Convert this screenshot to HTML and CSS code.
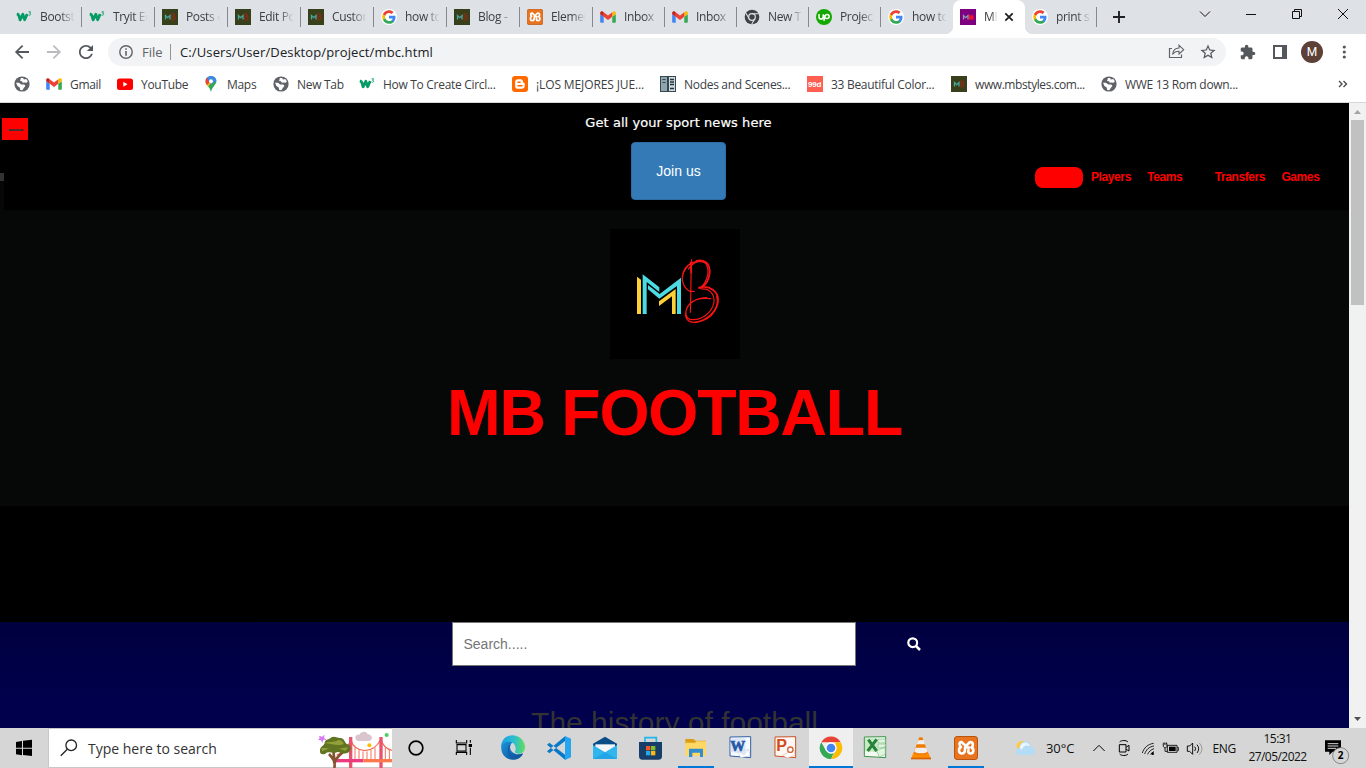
FILE: index.html
```html
<!DOCTYPE html>
<html lang="en">
<head>
<meta charset="utf-8">
<title>MB Football</title>
<link rel="stylesheet" href="styles.css">
</head>
<body>
<svg class="defs" aria-hidden="true">
  <symbol id="w3" viewBox="0 0 16 16"><path d="M.8 4.800c1.500.3 2 1.200 2.400 2.500l.9 3.500 2.700-5.500 1.900 5.500 2.500-5.800" fill="none" stroke="#049b66" stroke-width="2.800" stroke-linejoin="round"/><path d="M12.600 2.800h2l-1 1.500c1.600 0 1.500 2.300-.9 2" fill="none" stroke="#049b66" stroke-width=".9"/></symbol>
  <symbol id="mb" viewBox="0 0 16 16"><path fill="#37401a" d="M0 0h16v16H0z"/><path d="M3.500 10.500v-4l2.200 2.200 2.300-2.200v4" fill="none" stroke="#48a69b" stroke-width="1.300"/><path d="M10 11V5c3-1 3.500 2 1 2.800 4 0 2 3.700-1 3.200" fill="none" stroke="#8f2a17" stroke-width="1.100"/></symbol>
  <symbol id="mbp" viewBox="0 0 16 16"><path fill="#7e007e" d="M0 0h16v16H0z"/><path d="M3.500 10.500v-4l2.200 2.200 2.300-2.200v4" fill="none" stroke="#8f97b8" stroke-width="1.300"/><path d="M9 6.200h4.500v4.400H9z" fill="#f0102a"/></symbol>
  <symbol id="google" viewBox="-1 -1 26 26"><circle cx="12" cy="12" r="13" fill="#fff"/><path fill="#4285f4" d="M22.560 12.250c0-.78-.07-1.530-.2-2.250H12v4.260h5.920c-.26 1.370-1.040 2.530-2.210 3.310v2.770h3.570c2.080-1.920 3.280-4.740 3.280-8.090z"/><path fill="#34a853" d="M12 23c2.970 0 5.460-.98 7.280-2.660l-3.570-2.770c-.98.66-2.230 1.060-3.710 1.060-2.860 0-5.290-1.930-6.160-4.530H2.180v2.840C3.990 20.530 7.700 23 12 23z"/><path fill="#fbbc05" d="M5.840 14.090c-.22-.66-.35-1.360-.35-2.090s.13-1.430.35-2.090V7.070H2.180C1.430 8.550 1 10.220 1 12s.43 3.450 1.180 4.930z"/><path fill="#ea4335" d="M12 5.380c1.620 0 3.060.56 4.210 1.640l3.150-3.150C17.450 2.090 14.970 1 12 1 7.700 1 3.990 3.470 2.180 7.070l3.660 2.840c.87-2.600 3.300-4.530 6.160-4.530z"/></symbol>
  <symbol id="gmail" viewBox="51 30 90 90"><path fill="#4285f4" d="M58 108h14V74L52 59v43c0 3.320 2.690 6 6 6"/><path fill="#34a853" d="M120 108h14c3.320 0 6-2.690 6-6V59l-20 15"/><path fill="#fbbc04" d="M120 48v26l20-15v-8c0-7.420-8.470-11.650-14.400-7.200"/><path fill="#ea4335" d="M72 74V48l24 18 24-18v26L96 92"/><path fill="#c5221f" d="M52 51v8l20 15V48l-5.600-4.200c-5.940-4.450-14.400-.22-14.400 7.200"/></symbol>
  <symbol id="xampp" viewBox="0 0 24 24"><rect x=".5" y=".5" width="23" height="23" rx="2.500" fill="#e8741f" stroke="#b9540f"/><path d="M7.500 6C5 6 4.800 9.500 7 11c-3 1.500-2.500 6.500 1 6.500 2.500 0 3-2 3-4.500v-1.500h4M7.500 6 12 10l4-4c3.500 0 3.500 4 1.500 5.500 3 1.500 2.200 6-1 6-2.500 0-2.500-2-2-3.500" fill="none" stroke="#fff" stroke-width="2.600" stroke-linejoin="round" stroke-linecap="round"/></symbol>
  <symbol id="chromegrey" viewBox="0 0 24 24"><circle cx="12" cy="12" r="11" fill="#3f4347"/><circle cx="12" cy="12" r="5" fill="#3f4347" stroke="#dee1e6" stroke-width="1.800"/><path d="M12 7h10M7.700 14.500 2.800 6M16.300 14.500 11.500 23" stroke="#dee1e6" stroke-width="1.600"/></symbol>
  <symbol id="upwork" viewBox="0 0 16 16"><circle cx="8" cy="8" r="8" fill="#14a800"/><path d="M3 5v2.700c0 3.200 4.200 3.200 4.200 0V5.500c1 2.600 2 4.100 3.700 4.100 3 0 3-4 0-4-1.800 0-2.200 2-3 6.200" fill="none" stroke="#fff" stroke-width="1.500"/></symbol>
  <symbol id="globe" viewBox="1.500 1.500 21 21"><circle cx="12" cy="12" r="10" fill="#5f6368"/><path d="M4.200 10.500 8 10.200l3 2.300h4l1.500 2-2 2.500-2 3.200-2.800-.2-.7-3.500-3-1.800zM10.500 4l3 .2 1 1.800 3-.5 2.300 3-1.800 2-3-.5-2 .5-1-2-2.500-.5z" fill="#fff"/></symbol>
  <symbol id="blogger" viewBox="0 0 16 16"><rect width="16" height="16" rx="3" fill="#ff6a00"/><path d="M5.800 3.200h2.700c1.500 0 2.500 1 2.500 2.500 0 1.300 1.700.5 1.700 1.800v2.300c0 2-1 3-3 3H5.800c-1.700 0-2.600-1-2.600-2.600V5.800c0-1.600 1-2.600 2.600-2.600z" fill="#fff"/><path d="M6 6.300h2M6 9.700h4" stroke="#ff6a00" stroke-width="1.500" stroke-linecap="round"/></symbol>
</svg>

<header class="browser">
  <div class="tabstrip">
    <div class="tab"><svg><use href="#w3"/></svg><span>Bootst</span></div>
    <div class="tab"><svg><use href="#w3"/></svg><span>Tryit Ed</span></div>
    <div class="tab"><svg><use href="#mb"/></svg><span>Posts ‹</span></div>
    <div class="tab"><svg><use href="#mb"/></svg><span>Edit Po</span></div>
    <div class="tab"><svg><use href="#mb"/></svg><span>Custon</span></div>
    <div class="tab"><svg><use href="#google"/></svg><span>how to</span></div>
    <div class="tab"><svg><use href="#mb"/></svg><span>Blog -</span></div>
    <div class="tab"><svg><use href="#xampp"/></svg><span>Elemer</span></div>
    <div class="tab narrow"><svg><use href="#gmail"/></svg><span>Inbox</span></div>
    <div class="tab narrow"><svg><use href="#gmail"/></svg><span>Inbox</span></div>
    <div class="tab narrow"><svg><use href="#chromegrey"/></svg><span>New T</span></div>
    <div class="tab narrow"><svg><use href="#upwork"/></svg><span>Projec</span></div>
    <div class="tab narrow last"><svg><use href="#google"/></svg><span>how to</span></div>
    <div class="tab narrow active"><svg><use href="#mbp"/></svg><span>MB</span><svg class="tab-close" viewBox="0 0 10 10"><path d="m1.300 1.300 7.400 7.400M8.700 1.300 1.300 8.700" stroke="#202124" stroke-width="1.800"/></svg></div>
    <div class="tab narrow"><svg><use href="#google"/></svg><span>print s</span></div>
    <svg class="new-tab" viewBox="0 0 12 12"><path d="M6 0v12M0 6h12" stroke="#202124" stroke-width="1.900"/></svg>
    <div class="window-controls">
      <svg viewBox="0 0 12 12"><path d="m1 3.500 5 5 5-5" /></svg>
      <svg viewBox="0 0 12 12"><path d="M1 6.500h10"/></svg>
      <svg viewBox="0 0 12 12"><path d="M1.500 3.500h7v7h-7zM3.500 3.500v-2h7v7h-2"/></svg>
      <svg viewBox="0 0 12 12"><path d="m1 1 10 10M11 1 1 11"/></svg>
    </div>
  </div>

  <div class="toolbar">
    <svg class="tool" viewBox="-4 -6 32 36"><path transform="translate(12 12) scale(.88) translate(-12 -12)" d="M20 11H7.830l5.590-5.590L12 4l-8 8 8 8 1.410-1.410L7.830 13H20z"/></svg>
    <svg class="tool faded" viewBox="-4 -6 32 36"><path transform="translate(12 12) scale(-.88 .88) translate(-12 -12)" d="M20 11H7.830l5.590-5.590L12 4l-8 8 8 8 1.410-1.410L7.830 13H20z"/></svg>
    <svg class="tool" viewBox="-4 -6 32 36"><path transform="translate(12 12) scale(.88) translate(-12 -12)" d="M17.650 6.350C16.200 4.900 14.210 4 12 4c-4.420 0-7.990 3.580-7.990 8s3.570 8 7.990 8c3.730 0 6.840-2.550 7.730-6h-2.080c-.82 2.330-3.040 4-5.650 4-3.310 0-6-2.690-6-6s2.690-6 6-6c1.660 0 3.140.69 4.220 1.780L13 11h7V4z"/></svg>
    <div class="omnibox">
      <svg class="info" viewBox="0 0 14 14"><circle cx="7" cy="7" r="6.200" fill="none" stroke="#5f6368" stroke-width="1.400"/><path d="M7 3.200v1.500M7 6v4.700" stroke="#5f6368" stroke-width="1.600"/></svg>
      <span class="scheme">File</span>
      <span class="url">C:/Users/User/Desktop/project/mbc.html</span>
      <svg class="tool share" viewBox="0 0 32 36"><path d="M12 14.500H9.500v9h12V20.500" fill="none" stroke="#5f6368" stroke-width="1.200"/><path d="M12.500 20.500c.5-4.500 3-6.500 6.500-6.500v-2.700l4.700 4.400-4.700 4.300v-2.700c-3 0-5 .9-6.500 3.200z" fill="none" stroke="#5f6368" stroke-width="1.100"/></svg>
      <svg class="tool" viewBox="-4 -6 32 36"><path transform="translate(12 12) scale(.76) translate(-12 -12)" d="m22 9.240-7.190-.62L12 2 9.190 8.630 2 9.240l5.460 4.730L5.820 21 12 17.270 18.180 21l-1.630-7.030zM12 15.400l-3.760 2.270 1-4.280-3.320-2.880 4.380-.38L12 6.100l1.710 4.040 4.380.38-3.320 2.880 1 4.280z"/></svg>
    </div>
    <svg class="tool" viewBox="-4 -6 32 36"><path transform="translate(12 12) scale(.69) translate(-12.500 -11.500)" d="M20.500 11H19V7c0-1.100-.9-2-2-2h-4V3.500C13 2.120 11.880 1 10.500 1S8 2.120 8 3.500V5H4c-1.100 0-1.990.9-1.990 2v3.800H3.500c1.490 0 2.700 1.210 2.700 2.700s-1.210 2.700-2.700 2.700H2V20c0 1.100.9 2 2 2h3.800v-1.500c0-1.490 1.210-2.700 2.700-2.700s2.700 1.210 2.700 2.700V22H17c1.100 0 2-.9 2-2v-4h1.500c1.380 0 2.500-1.120 2.500-2.500S21.880 11 20.500 11z"/></svg>
    <svg class="tool" viewBox="0 0 32 36"><path fill-rule="evenodd" d="M9 11h14v14H9zm2 2v10h7V13z"/></svg>
    <div class="avatar"><b>M</b></div>
    <svg class="tool" viewBox="0 0 32 36"><circle cx="16.300" cy="13" r="1.600"/><circle cx="16.300" cy="18" r="1.600"/><circle cx="16.300" cy="23" r="1.600"/></svg>
  </div>

  <nav class="bookmarks">
    <div><svg><use href="#globe"/></svg></div>
    <div><svg><use href="#gmail"/></svg><span>Gmail</span></div>
    <div><svg viewBox="0 0 16 16"><rect y="2.500" width="16" height="11.500" rx="2.500" fill="#f00"/><path d="m6.300 5.700 4.200 2.500-4.200 2.500z" fill="#fff"/></svg><span>YouTube</span></div>
    <div><svg viewBox="0 0 16 16"><path d="M8 0C5 0 2.600 2.300 2.600 5.200 2.600 8.700 6.500 10 8 16c1.500-6 5.400-7.300 5.400-10.800C13.400 2.300 11 0 8 0" fill="#34a853"/><path d="M2.600 5.500C2.500 8 4 9.300 5 10.600L10 5z" fill="#fbbc04"/><path d="M2.600 5.200c0-1.500.6-2.700 1.500-3.600L8 5 4 9C3 8 2.600 6.500 2.600 5.200" fill="#ea4335"/><path d="M4 1.700C6 0 8.500-.5 10.500.6L6 5.500zM10.500.6c1.700.8 2.800 2.400 2.900 4.200L7 9z" fill="#4285f4"/><circle cx="8" cy="5.200" r="2" fill="#fff"/></svg><span>Maps</span></div>
    <div><svg><use href="#globe"/></svg><span>New Tab</span></div>
    <div><svg><use href="#w3"/></svg><span>How To Create Circl...</span></div>
    <div><svg><use href="#blogger"/></svg><span class="caps">¡LOS MEJORES JUE...</span></div>
    <div><svg viewBox="0 0 16 16"><path fill="#35474f" d="M0 0h16v16H0z"/><path fill="#90a4ae" d="M1 1h6v14H1z"/><path fill="#cfd8dc" d="M9 1h6v14H9z"/><path d="M2.500 3.500h3M2.500 6.500h3" stroke="#35474f"/><path d="M10 3.500h4M10 6h4M10 8.500h4M10 12.500h4" stroke="#24343b" stroke-width="1.300"/></svg><span>Nodes and Scenes...</span></div>
    <div><svg viewBox="0 0 16 16"><path fill="#fe5f50" d="M0 0h16v16H0z"/><text x="1" y="10.800" class="nine">99d</text></svg><span>33 Beautiful Color...</span></div>
    <div><svg><use href="#mb"/></svg><span class="tight">www.mbstyles.com...</span></div>
    <div><svg><use href="#globe"/></svg><span>WWE 13 Rom down...</span></div>
    <svg class="more" viewBox="0 0 10 8"><path d="m1 1 3 3-3 3M5.500 1l3 3-3 3" fill="none" stroke="#4a4d51" stroke-width="1.400"/></svg>
  </nav>
</header>

<main class="viewport">
  <div class="page">
    <section class="masthead">
      <div class="left-edge"><div class="menu-chip">----</div></div>
      <div class="join">
        <p>Get all your sport news here</p>
        <button>Join us</button>
      </div>
      <nav class="links">
        <a class="pill"></a><a>Players</a><a>Teams</a><a class="spaced">Transfers</a><a>Games</a>
      </nav>
      <i class="stub"></i>
    </section>
    <section class="hero">
      <svg class="logo" viewBox="30 27 390 390"><path fill="#000" d="M30 27h390v390H30z"/>
        <path fill="#fcd036" d="M111 170l12 9v103h-12zM177 244l50-37v75h-11v-53l-39 29z"/>
        <path fill="#4cdbe3" d="M128 163l50 39v14l-38-30v96h-12zM144 195l35 27 64-49v109h-12v-84l-53 38-34-28z"/>
        <g fill="none" stroke="#f51414" stroke-linecap="round"><path stroke-width="3.500" d="M275 119c-3 50-2 105-4 158"/><path stroke-width="5.500" d="M272 128l2 30M301 204c24-10 33-46 25-66-5-15-24-19-37-15M297 203c34-9 58 13 57 38-1 32-33 62-69 66"/><path stroke-width="3.500" d="M319 131c-22-15-58-3-68 23-10 24-1 49 18 60l14 0M265 148c12-22 42-32 53-16 14 22 1 62-21 73M247 183c-2-25 13-47 33-56"/><path stroke-width="3.500" d="M303 207c25-3 41 15 39 39-5 33-40 58-72 52-20-7-12-36-1-46 15-16 43-18 63-16M285 307c-22 2-32-14-27-33 5-26 33-41 63-41M350 229c8 26-9 59-36 70"/></g></svg>
      <h1>MB FOOTBALL</h1>
    </section>
    <section class="story">
      <form class="search">
        <input type="text" placeholder="Search.....">
        <svg viewBox="0 0 14 14"><circle cx="5.700" cy="5.700" r="4.400" fill="none" stroke="#fff" stroke-width="2.200"/><path d="m9 9 4 4" stroke="#fff" stroke-width="2.500"/></svg>
      </form>
      <h2>The history of football</h2>
    </section>
  </div>
  <div class="scrollbar">
    <svg viewBox="0 0 17 17"><path d="m5 11 3.500-4 3.500 4z" fill="#a3a3a3"/></svg>
    <div class="thumb"></div>
    <svg class="down" viewBox="0 0 17 17"><path d="m5 6 3.500 4L12 6z" fill="#505050"/></svg>
  </div>
</main>

<footer class="taskbar">
  <svg class="start" viewBox="0 84 144 120"><path d="M48 126l18-3v20H48zM69 122l27-3v24H69zM48 146h18v20l-18-3zM69 146h27v22l-27-3z"/></svg>
  <div class="finder">
    <svg class="lens" viewBox="0 0 18 18"><circle cx="11.200" cy="6.300" r="5.300"/><path d="M7.300 10.200.8 16.800"/></svg>
    <span>Type here to search</span>
    <svg class="bridge" viewBox="954 84 222 120"><g fill="#d8c5ce"><path d="M1066 113c0-8 8-11 13-9 4-11 21-11 24-1 8 0 13 6 13 11-1 6-6 9-11 9h-28c-6 0-11-4-11-10z"/></g><g fill="none" stroke="#f3705a"><path stroke-width="4" d="M1052 118c12 45 70 45 90 0 7 20 20 31 34 33M1010 165c18-5 30-18 42-43"/><path stroke-width="3" d="M1065 142v36M1077 150v28M1089 154v24M1101 154v24M1113 150v28M1125 143v35M1156 143v35M1168 150v28"/></g><path stroke="#e8526a" stroke-width="10" d="M1052 111v93M1143 111v93"/><path fill="#ed397f" d="M1005 177h85v10h-85z"/><path fill="#ff784d" d="M1090 177h86v10h-86z"/><path d="M1003 204c4-20-5-30-16-42M1003 194c2-20 14-26 26-38M1003 178l-3-25" fill="none" stroke="#865332" stroke-width="8"/><path fill="#607421" d="M960 154c-2-14 12-16 14-25 0-12 16-10 20-17 10-5 20 2 25 2 15-1 14 14 22 18 17 4 13 25-2 28-12 3-17-3-27-4-12 8-25-6-36 5-8 4-17 1-16-7z"/><path fill="#93a03a" d="M975 130c10-8 24 0 40-10 12 0 14 8 17 12-20 8-35-1-57-2M965 145c10-3 16 2 25 0l-25 9zM1014 145c10 2 20-5 30-2l-8 9z"/><path fill="#d77cf3" d="m957 107 9 3 8-6-2 10 8 5-10 1-3 9-4-8-9-1 5-6z"/><circle cx="1108" cy="136" r="6" fill="#ffb900"/><circle cx="1160" cy="105" r="6" fill="#47d15f"/></svg>
  </div>
  <svg class="app w48" viewBox="6 24 144 120"><circle cx="78" cy="84" r="20.500" fill="none" stroke="#000" stroke-width="5"/></svg>
  <svg class="app w50" viewBox="150 24 150 120"><path d="M199 60v9h31v-9M201 74h27v19h-27zM199 105v-8h31v8M241 60v8M241 83v22" fill="none" stroke="#000" stroke-width="3.300"/><path d="M236 72h10v9h-10z"/></svg>
  <svg class="app" viewBox="300 24 138 120"><defs><linearGradient id="edgeTop"><stop offset="0" stop-color="#1b9de2"/><stop offset=".55" stop-color="#2cc0d0"/><stop offset="1" stop-color="#62df57"/></linearGradient><linearGradient id="edgeLow" x2="1" y2="1"><stop stop-color="#1c96dc"/><stop offset="1" stop-color="#0a4a93"/></linearGradient></defs><path fill="url(#edgeLow)" d="M334 77c-4 35 29 51 52 38 9-5 14-12 12-15-19 8-37-2-38-19 0-8 6-13 10-15-15-10-33 0-36 11"/><path fill="url(#edgeTop)" d="M333 83c0-50 65-48 72-5 2 22-18 27-29 20-4-3 2-5 1-13-2-27-40-24-44-2"/><path fill="#145ba9" d="M357 75c-15 34 19 51 35 36-23 6-43-13-30-37z"/></svg>
  <svg class="app" viewBox="438 24 138 120"><path fill="#0a78c8" d="M471 74l7-6 48 37v15zM471 94l7 6 48-38V48z"/><path fill="#25a4ef" d="M525 48l18 8v56l-18 8z"/></svg>
  <svg class="app" viewBox="576 24 138 120"><path fill="#084c88" d="M609 71l36-21 36 21v15h-72z"/><path fill="#f4f5f7" d="M616 73h59v27h-59z"/><path fill="#2fb6ee" d="M609 75l36 22 36-22v42h-72z"/><path fill="#1590db" d="M645 97l36 20h-72z" opacity=".45"/></svg>
  <svg class="app" viewBox="714 24 138 120"><path d="M765 67V53h34v14" fill="none" stroke="#21b5ed" stroke-width="5"/><path fill="#173e68" d="M747 66h69v42c0 9-4 11-11 11h-47c-8 0-11-3-11-11z"/><path fill="#f65328" d="M768 78h13v13h-13z"/><path fill="#80bd27" d="M783 78h13v13h-13z"/><path fill="#21a8ed" d="M768 93h13v13h-13z"/><path fill="#fdb813" d="M783 93h13v13h-13z"/></svg>
  <svg class="app w45 running files" viewBox="852 24 135 120"><path fill="#dc9c16" d="M886 57h25l5 5h32v11h-62z"/><path fill="#ffd764" d="M886 68h29l5-4h28v44h-62z"/><path fill="#338bd0" d="M897 86h42v25h-9V98h-23v13h-10z"/></svg>
  <svg class="app w45" viewBox="987 24 135 120"><path fill="#f7faff" stroke="#315fa3" stroke-width="3" d="M1020 51l62-1v63l-62-5z"/><path fill="#dbe6f7" d="M1022 55h44v46l-44-5z"/><path fill="#fff" stroke="#91a7cf" d="m1044 96 32-8 4 19-28 6zM1048 96l14 9 12-15"/><text x="1021" y="94" class="office">W</text></svg>
  <svg class="app w45" viewBox="1122 24 135 120"><path fill="#fff7f2" stroke="#c75227" stroke-width="3" d="M1155 51l62-1v63l-62-5z"/><text x="1159" y="94" class="office ppt">P</text><path d="m1177 106 34-16 5 15-24 9z" fill="#fff" stroke="#db835f"/><circle cx="1201" cy="89" r="8" fill="#fff" stroke="#cf6540" stroke-width="4"/></svg>
  <svg class="app w44 current" viewBox="-66 -60 132 120"><path fill="#ea4335" d="M-29-17A33 33 0 0 1 29-17H0z"/><path fill="#fbbc04" d="M29-17A33 33 0 0 1 0 33l15-27L13-17z"/><path fill="#34a853" d="M0 33A33 33 0 0 1-29-17L-15 8 8 15z"/><circle r="17" fill="#fff"/><circle r="13" fill="#4285f4"/></svg>
  <svg class="app" viewBox="9 84 138 120"><path fill="#f4faf2" stroke="#3d944c" stroke-width="3" d="M43 111l64-1v63l-64-4z"/><path fill="#c9e8c5" d="M45 115h38v42l-38-3z"/><path fill="#e2f3e0" stroke="#5eac69" stroke-width="1.500" d="M84 117h22v12H84zM84 132h23v12H84zM80 152l26-13v24l-18 8z"/><path d="m55 119 25 34M80 118l-27 35" stroke="#268338" stroke-width="9"/></svg>
  <svg class="app w45" viewBox="147 84 135 120"><path fill="#ff8b00" d="M190 158h45l8 19h-60z"/><path fill="#f17b00" d="M208 112h9l17 46c-7 9-34 9-43 0z"/><path fill="#f1efed" d="m205 121 16-1 4 13h-25zM197 143h32l4 12c-11 7-30 6-40 0z"/><path fill="#d96100" d="M183 173h60v5h-60z"/></svg>
  <div class="app w45 running xam"><svg><use href="#xampp"/></svg></div>
  <svg class="weather" viewBox="489 84 78 120"><circle cx="516" cy="139" r="16" fill="#ffc83d"/><path fill="#b4dcf5" d="M508 165c-17-2-11-23 1-22 0-24 31-24 34-3 19 3 16 25 1 25z"/><path fill="#e9f5ff" d="M509 143c5-20 27-19 31-5-14-5-22 2-24 12z"/></svg>
  <span class="temp">30°C</span>
  <svg class="tray t1" viewBox="720 84 54 120"><path d="m730 153 17-17 17 17"/></svg>
  <svg class="tray t1" viewBox="794 84 54 120"><path d="M807 134h20v22h-20zM828 141l8-5v17l-8-5M808 126c5-6 20-6 25 0M808 162c5 6 20 6 25 0"/></svg>
  <svg class="tray t1" viewBox="867 84 54 120"><path stroke-width="2.500" d="M877 159c4-14 16-27 34-29M884 162c4-12 13-22 28-24M893 163c3-8 10-14 19-17M902 164c2-4 5-7 10-9"/><circle cx="908" cy="161" r="4" fill="#000" stroke="none"/></svg>
  <svg class="tray t2 power" viewBox="932 84 60 120"><path stroke-width="2.500" d="M954 136h29v21h-29zM984 142h3v10h-3M940 132h14M944 127v5M951 127v5M942 133v6c2 6 9 6 11 0v-6M947 143v11h7"/><path fill="#000" stroke="none" d="M959 140h20v13h-20z"/></svg>
  <svg class="tray t2" viewBox="1005 84 60 120"><path stroke-width="2.800" d="M1012 138h7l9-9v34l-9-9h-7zM1034 140q6 6 0 13M1041 134q10 12 0 25"/><path stroke="#8b8b8b" stroke-width="2.500" d="M1048 129q16 17 0 35"/></svg>
  <span class="lang">ENG</span>
  <div class="clock"><span>15:31</span><span>27/05/2022</span></div>
  <svg class="notes" viewBox="1413 84 120 120"><path d="M1425 121h48v34h-25l-10 10v-10h-13z"/><path stroke="#d6d6d6" stroke-width="3" d="M1433 131h32M1433 138h32M1433 145h25"/><circle cx="1472" cy="167" r="24" fill="#d6d6d6" stroke="#777" stroke-width="2.500"/><text x="1463" y="178" class="count">2</text></svg>
</footer>
</body>
</html>
```
FILE: styles.css
```css
* { box-sizing: border-box; }
body { margin: 0; width: 1366px; height: 768px; overflow: hidden; display: flex; flex-direction: column; font-family: "Open Sans", "Noto Sans", sans-serif; }
svg { display: block; flex: none; }
.defs { position: absolute; width: 0; height: 0; }
.nine { font: bold 8px "Liberation Sans", sans-serif; fill: #fff; letter-spacing: -.2px; }

/* Browser chrome */
.browser { height: 103px; flex: none; background: #fff; border-bottom: 1px solid #d5d7da; color: #3c4043; font-size: 12px; }
.tabstrip { height: 34px; display: flex; align-items: stretch; background: #dee1e6; padding-left: 9px; }
.tab { width: 73px; display: flex; align-items: center; padding-left: 7px; position: relative; flex: none; }
.tab.narrow { width: 72px; }
.tab:not(.active):not(.last)::after { content: ""; position: absolute; right: 0; top: 7px; width: 1px; height: 20px; background: #85888c; }
.tab > svg { width: 16px; height: 16px; }
.tab span { width: 34px; margin-left: 8px; line-height: 20px; white-space: nowrap; overflow: hidden; letter-spacing: -.35px; -webkit-mask-image: linear-gradient(to right, #000 60%, transparent 102%); mask-image: linear-gradient(to right, #000 60%, transparent 102%); }
.tab.active { background: #fff; border-radius: 8px 8px 0 0; }
.tab.active::before { content: ""; position: absolute; bottom: 0; left: -8px; width: 88px; height: 8px; background: radial-gradient(circle at 0 0, transparent 8px, #fff 8.500px) left / 8px 8px no-repeat, radial-gradient(circle at 100% 0, transparent 8px, #fff 8.500px) right / 8px 8px no-repeat; }
.tab.active span { width: 13px; }
.tab > .tab-close { width: 10px; height: 10px; margin-left: 7px; }
.new-tab { width: 12px; height: 12px; margin: 11px 0 0 16px; }
.window-controls { margin-left: auto; display: flex; padding-top: 8px; }
.window-controls svg { width: 46px; height: 12px; fill: none; stroke: #111; }
.toolbar { height: 36px; display: flex; align-items: center; padding: 0 6px; }
.tool { width: 32px; height: 36px; fill: #54585d; }
.faded { fill: #b9bbbe; }
.omnibox { flex: 1; height: 28px; margin: 0 6px; border-radius: 14px; background: #f1f3f4; display: flex; align-items: center; padding-left: 11px; padding-right: 2px; font-size: 13px; }
.info { width: 14px; height: 14px; }
.scheme { color: #5f6368; margin-left: 9px; width: 29px; border-right: 1px solid #90959a; line-height: 16px; font-size: 13px; }
.url { margin-left: 9px; color: #202124; letter-spacing: .12px; }
.share { margin-left: auto; }
.avatar { width: 22px; height: 22px; margin: 0 5px; border-radius: 50%; background: #5d4037; color: #fff; text-align: center; font: 12px/22px Roboto, sans-serif; }
.avatar b { font-weight: 400; }
.bookmarks { height: 28px; display: grid; grid-template-columns: 32px 71px 86px 70px 86px 153px 148px 147px 144px 150px 237px 10px; padding-left: 14px; align-items: center; }
.bookmarks div { display: flex; align-items: center; gap: 8px; white-space: nowrap; letter-spacing: -.3px; }
.bookmarks div svg { width: 16px; height: 16px; }
.bookmarks .caps { letter-spacing: -.12px; }
.bookmarks .tight { letter-spacing: -.42px; }
.more { width: 10px; height: 8px; }

/* Web page */
.viewport { flex: 1; min-height: 0; display: flex; }
.page { width: 1349px; overflow: hidden; background: #000; font-family: "Liberation Sans", Arial, sans-serif; }
.masthead { height: 107px; display: grid; grid-template-columns: 585px 187px 1fr; position: relative; }
.left-edge { padding: 15px 0 0 2px; }
.menu-chip { width: 26px; height: 22px; background: #f00; color: #333; font: bold 14px/22px "Liberation Sans", sans-serif; text-align: center; letter-spacing: -1px; }
.stub { position: absolute; left: 0; top: 70px; width: 4px; height: 37px; background: #060808; border-top: 8px solid #333; }
.join { text-align: center; }
.join p { margin: 12px 0 11px; color: #fff; font: 13px/16px "DejaVu Sans", Verdana, sans-serif; letter-spacing: .06px; white-space: nowrap; -webkit-text-stroke: .2px #fff; }
.join button { width: 95px; height: 58px; padding: 0; border: 1px solid #2e6da4; border-radius: 4px; background: #337ab7; color: #fff; font: 14px "Liberation Sans", sans-serif; }
.links { display: flex; align-items: flex-start; padding: 64px 0 0 263px; color: #f00; font-size: 12px; font-weight: bold; line-height: 20px; letter-spacing: -.4px; }
.links a { margin-right: 16.300px; }
.links .pill { width: 48px; height: 21px; border-radius: 8px; background: #f00; margin-right: 8px; }
.links .spaced { margin-left: 16px; }
.hero { height: 296px; background: #060808; padding-top: 19px; }
.logo { width: 130px; height: 130px; margin: 0 auto 0 610px; }
.hero h1 { margin: 18px 0 0; text-align: center; color: #f00; font-size: 64.500px; line-height: 72px; letter-spacing: -1.300px; }
.story { margin-top: 116px; height: 106px; overflow: hidden; background: linear-gradient(#00003f, #00004c 75%); }
.search { display: flex; align-items: center; margin-left: 452px; }
.search input { width: 404px; height: 44px; border: 1px solid #767676; border-radius: 0; padding: 1px 10.500px; font: 14px "Liberation Sans", sans-serif; background: #fff; }
.search input::placeholder { color: #757575; }
.search svg { width: 14px; height: 14px; margin-left: 51px; }
.story h2 { margin: 40px 0 0; text-align: center; color: #333; font-size: 30px; font-weight: 400; line-height: 33px; }
.scrollbar { width: 17px; background: #f1f1f1; display: flex; flex-direction: column; align-items: center; }
.scrollbar svg { width: 17px; height: 17px; }
.scrollbar .thumb { width: 13px; height: 185px; background: #c1c1c1; }
.scrollbar .down { margin-top: auto; }

/* Taskbar */
.taskbar { height: 40px; flex: none; display: flex; align-items: center; background: #d6d6d6; color: #111; }
.start { width: 48px; height: 40px; }
.finder { width: 344px; height: 40px; display: flex; align-items: center; background: #fff; border: 1px solid #c8c8c8; border-right: 0; padding-left: 11px; font-size: 14px; color: #333; }
.lens { width: 18px; height: 18px; fill: none; stroke: #222; stroke-width: 1.300; }
.finder span { margin-left: 10px; white-space: nowrap; }
.bridge { width: 74px; height: 40px; margin-left: auto; }
.app { width: 46px; height: 40px; }
.w44 { width: 44px; }
.w45 { width: 45px; }
.w48 { width: 48px; }
.w50 { width: 50px; }
.running { background: linear-gradient(#0078d7, #0078d7) 4px bottom / 36px 2px no-repeat; }
.current { background: #efefef linear-gradient(#0078d7, #0078d7) 0 bottom / 44px 2px no-repeat; }
.xam { display: flex; align-items: center; justify-content: center; padding-right: 1px; }
.xam svg { width: 24px; height: 24px; }
.office { font: bold 45px "Liberation Serif", serif; fill: #2558a6; stroke: #2558a6; stroke-width: 2px; }
.ppt { font: bold 48px "Liberation Sans", sans-serif; fill: #d14b1e; stroke: none; }
.weather { width: 26px; height: 40px; margin-left: 24px; }
.temp { font-size: 13px; margin-left: 7px; width: 44px; letter-spacing: -.1px; white-space: nowrap; }
.tray { height: 40px; fill: none; stroke: #000; stroke-width: 3; }
.t1 { width: 18px; margin-right: 6.500px; }
.t2 { width: 20px; margin-right: 5px; }
.power { margin: 0 7px 0 -4px; }
.t2:not(.power) { margin-left: -2px; }
.lang { font-size: 12px; width: 30px; margin-left: 3px; letter-spacing: -.3px; }
.clock { width: 70px; display: flex; flex-direction: column; align-items: center; font-size: 12px; line-height: 18px; letter-spacing: -.55px; }
.notes { width: 40px; height: 40px; margin-left: 8px; }
.count { font: bold 30px "Open Sans", sans-serif; fill: #000; }
```
